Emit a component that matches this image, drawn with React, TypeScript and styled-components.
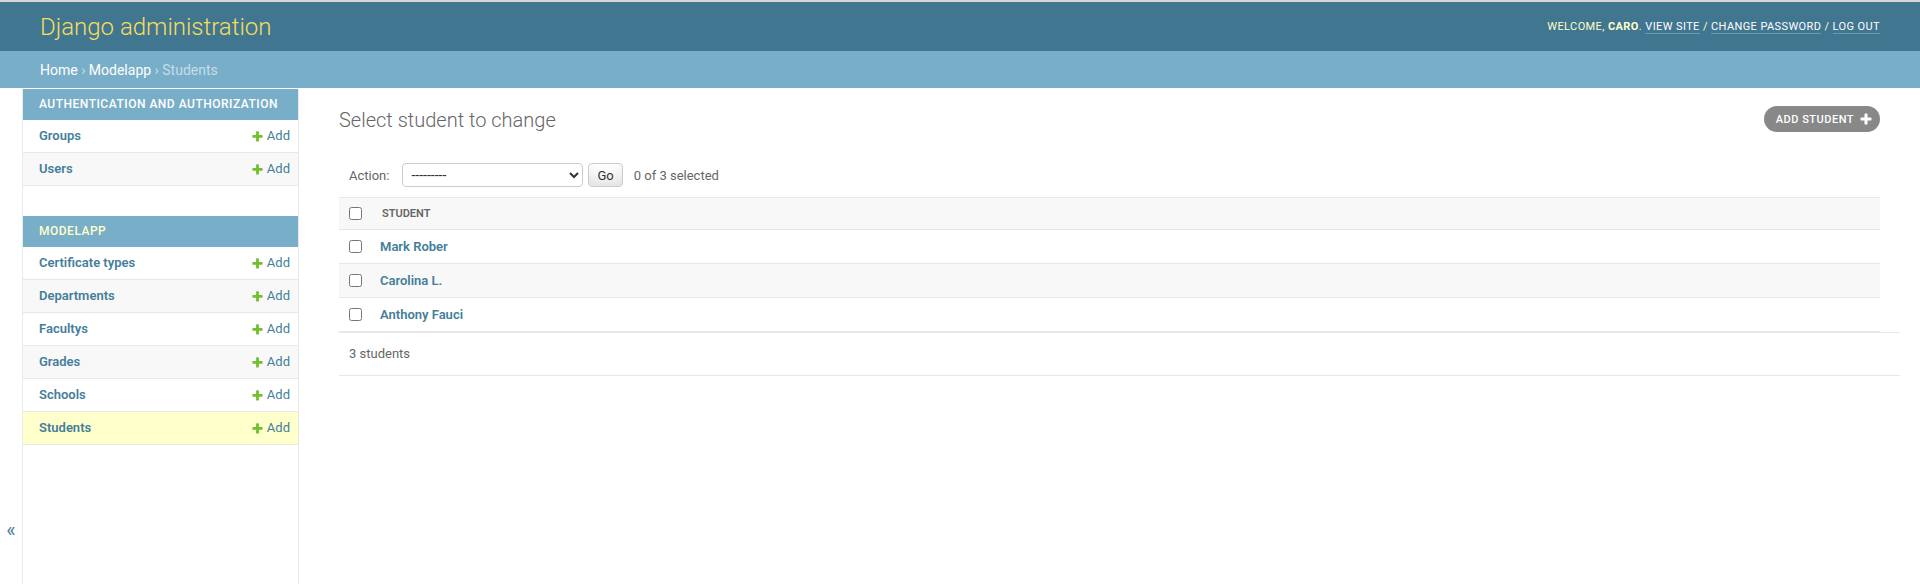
import React from 'react';
import styled, { createGlobalStyle } from 'styled-components';

const GlobalStyle = createGlobalStyle`
  html, body { margin: 0; padding: 0; }
  body {
    font-family: Roboto, "Liberation Sans", Arial, sans-serif;
    font-size: 14px;
    color: #333;
    background: #fff;
  }
  *, *::before, *::after { box-sizing: border-box; }
`;

const Page = styled.div`
  min-height: 100vh;
  display: flex;
  flex-direction: column;
  border-top: 2px solid #d6d6d6;
`;

const Header = styled.header`
  height: 49px;
  flex: 0 0 auto;
  display: flex;
  justify-content: space-between;
  align-items: center;
  padding: 0 40px;
  background: #417690;
  color: #ffc;
`;

const Branding = styled.h1`
  margin: 0;
  font-size: 24px;
  font-weight: 300;
  color: #f5dd5d;
`;

const UserTools = styled.div`
  font-size: 11px;
  letter-spacing: 0.4px;
  text-transform: uppercase;
  color: #ffc;
  white-space: nowrap;
`;

const UserName = styled.strong`
  font-weight: 700;
`;

const ToolLink = styled.a`
  color: #fff;
  text-decoration: none;
  border-bottom: 1px solid rgba(255, 255, 255, 0.25);
`;

const Breadcrumbs = styled.div`
  height: 37px;
  flex: 0 0 auto;
  display: flex;
  align-items: center;
  padding: 0 40px;
  background: #79aec8;
  color: #c4dce8;
  font-size: 14px;
`;

const CrumbLink = styled.a`
  color: #fff;
  text-decoration: none;
`;

const Main = styled.div`
  flex: 1 0 auto;
  display: flex;
`;

const Toggle = styled.button`
  flex: 0 0 23px;
  width: 23px;
  border: 0;
  border-right: 1px solid #eaeaea;
  background: #fff;
  color: #447e9b;
  font-family: inherit;
  font-size: 20px;
  line-height: 23px;
  padding: 431px 0 0;
  display: flex;
  justify-content: center;
  align-items: flex-start;
  cursor: pointer;
`;

const Sidebar = styled.nav`
  flex: 0 0 276px;
  border-top: 1px solid transparent;
  border-right: 1px solid #eaeaea;
  background: #fff;
`;

const Module = styled.div`
  margin-bottom: 30px;
`;

const ModuleCaption = styled.div<{ $current?: boolean }>`
  padding: 8px 8px 8px 16px;
  line-height: 15px;
  background: #79aec8;
  font-size: 12px;
  font-weight: 500;
  letter-spacing: 0.5px;
  text-transform: uppercase;
  white-space: nowrap;
  color: ${(p) => (p.$current ? '#ffc' : '#fff')};
`;

const ModelRow = styled.div<{ $bg: string }>`
  display: flex;
  justify-content: space-between;
  align-items: center;
  border-bottom: 1px solid #e8e8e8;
  background: ${(p) => p.$bg};
  font-size: 13px;
  line-height: 16px;
`;

const ModelName = styled.a`
  padding: 8px 8px 8px 16px;
  font-weight: 600;
  color: #447e9b;
  text-decoration: none;
`;

const AddLink = styled.a`
  display: flex;
  align-items: center;
  gap: 3px;
  padding: 8px;
  color: #447e9b;
  text-decoration: none;
  white-space: nowrap;
`;

const Content = styled.div`
  flex: 1 1 auto;
  min-width: 0;
  padding: 20px 40px;
`;

const ContentHeader = styled.div`
  display: flex;
  justify-content: space-between;
  align-items: flex-start;
  margin-bottom: 20px;
`;

const Title = styled.h1`
  margin: 0;
  font-size: 20px;
  font-weight: 300;
  line-height: 25px;
  color: #666;
`;

const ObjectTool = styled.a`
  margin-top: -2px;
  display: flex;
  align-items: center;
  gap: 5px;
  height: 26px;
  padding: 0 7px 0 12px;
  border-radius: 15px;
  background: #888;
  color: #fff;
  font-size: 11px;
  font-weight: 500;
  letter-spacing: 0.5px;
  text-transform: uppercase;
  text-decoration: none;
  white-space: nowrap;
`;

const Actions = styled.div`
  display: flex;
  align-items: center;
  height: 44px;
  padding: 0 10px;
  color: #666;
  font-size: 13px;
`;

const ActionLabel = styled.label`
  display: flex;
  align-items: center;
  white-space: nowrap;
`;

const ActionSelect = styled.select`
  width: 181px;
  height: 24px;
  margin-left: 13px;
  padding: 0 0 0 4px;
  border: 1px solid #ccc;
  border-radius: 4px;
  background: #fff;
  color: #333;
  font-family: inherit;
  font-size: 14px;
`;

const GoButton = styled.button`
  height: 24px;
  margin-left: 5px;
  padding: 0 8px;
  border: 1px solid #ccc;
  border-radius: 4px;
  background: #fff;
  box-shadow: 0 -15px 20px -10px rgba(0, 0, 0, 0.15) inset;
  color: #333;
  font-family: inherit;
  font-size: 13px;
  line-height: 1;
  cursor: pointer;
`;

const Counter = styled.span`
  margin-left: 11px;
  font-size: 13px;
  color: #666;
`;

const Results = styled.div`
  width: 100%;
`;

const HeadRow = styled.div`
  display: flex;
  align-items: center;
  height: 33px;
  border-top: 1px solid #e8e8e8;
  border-bottom: 1px solid #e8e8e8;
  background: #f8f8f8;
`;

const ResultRow = styled.div<{ $bg: string }>`
  display: flex;
  align-items: center;
  height: 34px;
  border-bottom: 1px solid #e8e8e8;
  background: ${(p) => p.$bg};
  font-size: 13px;
  line-height: 16px;
`;

const CheckCell = styled.div`
  flex: 0 0 33px;
  display: flex;
  justify-content: center;
  align-items: center;
`;

const Check = styled.input`
  width: 13px;
  height: 13px;
  margin: 0;
`;

const ColumnTitle = styled.div`
  padding-left: 10px;
  font-size: 11px;
  font-weight: 600;
  color: #666;
  text-transform: uppercase;
`;

const ResultLink = styled.a`
  padding-left: 8px;
  font-weight: 600;
  color: #447e9b;
  text-decoration: none;
`;

const Paginator = styled.p`
  margin: 0 -20px 0 0;
  padding: 10px;
  line-height: 22px;
  border-top: 1px solid #e8e8e8;
  border-bottom: 1px solid #e8e8e8;
  font-size: 13px;
  color: #666;
`;

const PLUS =
  'M1600 796v192q0 40-28 68t-68 28h-416v416q0 40-28 68t-68 28h-192q-40 0-68-28t-28-68v-416h-416q-40 0-68-28t-28-68v-192q0-40 28-68t68-28h416v-416q0-40 28-68t68-28h192q40 0 68 28t28 68v416h416q40 0 68 28t28 68z';

const PlusIcon = ({ size, color }: { size: number; color: string }) => (
  <svg width={size} height={size} viewBox="0 0 1792 1792" aria-hidden="true">
    <path fill={color} d={PLUS} />
  </svg>
);

type Model = { name: string; current?: boolean };

const apps: { label: string; current?: boolean; models: Model[] }[] = [
  {
    label: 'Authentication and Authorization',
    models: [{ name: 'Groups' }, { name: 'Users' }],
  },
  {
    label: 'Modelapp',
    current: true,
    models: [
      { name: 'Certificate types' },
      { name: 'Departments' },
      { name: 'Facultys' },
      { name: 'Grades' },
      { name: 'Schools' },
      { name: 'Students', current: true },
    ],
  },
];

const students = ['Mark Rober', 'Carolina L.', 'Anthony Fauci'];

export default function App() {
  return (
    <>
      <GlobalStyle />
      <Page>
        <Header>
          <Branding>Django administration</Branding>
          <UserTools>
            Welcome, <UserName>caro</UserName>. <ToolLink href="#">View site</ToolLink> /{' '}
            <ToolLink href="#">Change password</ToolLink> / <ToolLink href="#">Log out</ToolLink>
          </UserTools>
        </Header>
        <Breadcrumbs>
          <CrumbLink href="#">Home</CrumbLink>&nbsp;›&nbsp;<CrumbLink href="#">Modelapp</CrumbLink>
          &nbsp;›&nbsp;Students
        </Breadcrumbs>
        <Main>
          <Toggle aria-label="Toggle navigation">«</Toggle>
          <Sidebar>
            {apps.map((app) => (
              <Module key={app.label}>
                <ModuleCaption $current={app.current}>{app.label}</ModuleCaption>
                {app.models.map((m, i) => (
                  <ModelRow
                    key={m.name}
                    $bg={m.current ? '#ffc' : i % 2 === 1 ? '#f8f8f8' : '#fff'}
                  >
                    <ModelName href="#">{m.name}</ModelName>
                    <AddLink href="#">
                      <PlusIcon size={13} color="#70bf2b" />
                      Add
                    </AddLink>
                  </ModelRow>
                ))}
              </Module>
            ))}
          </Sidebar>
          <Content>
            <ContentHeader>
              <Title>Select student to change</Title>
              <ObjectTool href="#">
                Add student
                <PlusIcon size={14} color="#fff" />
              </ObjectTool>
            </ContentHeader>
            <Actions>
              <ActionLabel>
                Action:
                <ActionSelect defaultValue="">
                  <option value="">---------</option>
                  <option value="delete">Delete selected students</option>
                </ActionSelect>
              </ActionLabel>
              <GoButton type="button">Go</GoButton>
              <Counter>0 of 3 selected</Counter>
            </Actions>
            <Results>
              <HeadRow>
                <CheckCell>
                  <Check type="checkbox" />
                </CheckCell>
                <ColumnTitle>Student</ColumnTitle>
              </HeadRow>
              {students.map((s, i) => (
                <ResultRow key={s} $bg={i % 2 === 1 ? '#f8f8f8' : '#fff'}>
                  <CheckCell>
                    <Check type="checkbox" />
                  </CheckCell>
                  <ResultLink href="#">{s}</ResultLink>
                </ResultRow>
              ))}
            </Results>
            <Paginator>3 students</Paginator>
          </Content>
        </Main>
      </Page>
    </>
  );
}
